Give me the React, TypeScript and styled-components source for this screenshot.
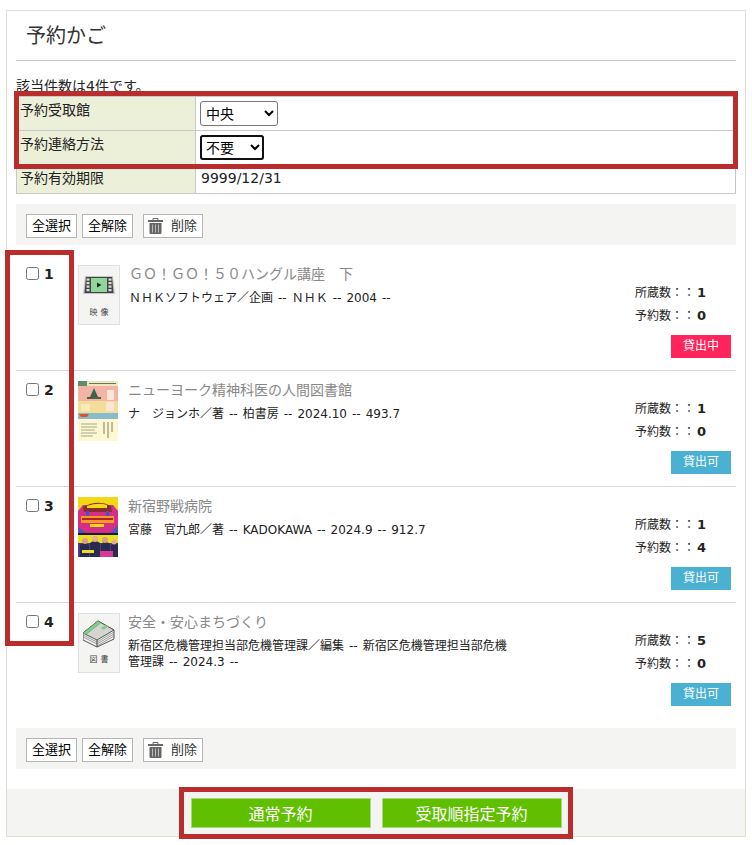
import React from "react";
import styled, { createGlobalStyle } from "styled-components";

const Global = createGlobalStyle`
  html, body { margin: 0; padding: 0; background: #fff; }
  body {
    font-family: "DejaVu Sans", "Noto Sans CJK JP", sans-serif;
    color: #222;
    font-size: 14px;
    text-spacing-trim: space-all;
  }
`;
const Page = styled.div`
  position: relative;
  width: 752px;
  height: 845px;
  padding: 10px 6px 0;
  box-sizing: border-box;
  overflow: hidden;
`;
const Panel = styled.div`
  border: 1px solid #deded2;
  height: 827px;
  box-sizing: border-box;
  display: flex;
  flex-direction: column;
`;
const Content = styled.div`
  flex: 1;
  padding: 0 9px;
`;
const Heading = styled.h1`
  margin: 0;
  height: 49px;
  padding-left: 10px;
  border-bottom: 1px solid #c8c8c8;
  font-size: 20px;
  font-weight: 400;
  line-height: 51px;
  color: #333;
`;
const Count = styled.p`
  margin: 0;
  height: 35px;
  padding-top: 15px;
  box-sizing: border-box;
  font-size: 14px;
  line-height: 20px;
  white-space: nowrap;
`;
const Table = styled.table`
  width: 720px;
  border-collapse: collapse;
  table-layout: fixed;
  font-size: 14px;
`;
const Th = styled.th`
  width: 179px;
  border: 1px solid #c8c8c8;
  background: #edf0d8;
  font-weight: 400;
  text-align: left;
  vertical-align: top;
  padding: 3px 3px;
  line-height: 20px;
  box-sizing: border-box;
`;
const Td = styled.td`
  border: 1px solid #c8c8c8;
  padding: 3px 5px;
  line-height: 20px;
  vertical-align: top;
`;
const Select = styled.select<{ $w: number; $focus?: boolean }>`
  display: block;
  width: ${(p) => p.$w}px;
  height: 25px;
  margin: 1px 0 0 -1px;
  font-family: inherit;
  font-size: 14px;
  background: #fff;
  color: #000;
  border: 1px solid #767676;
  border-radius: 3px;
  padding: 0 0 0 1px;
  ${(p) => p.$focus && `outline: 2px solid #101010; outline-offset: -2px;`}
`;
const Toolbar = styled.div<{ $top: number }>`
  margin-top: ${(p) => p.$top}px;
  height: 41px;
  background: #f4f4f2;
  padding: 10px 10px 0;
  box-sizing: border-box;
  display: flex;
  gap: 5px;
  align-items: flex-start;
`;
const ToolButton = styled.button`
  height: 24px;
  width: 51px;
  padding: 0;
  border: 1px solid #b4b4b4;
  background: #fff;
  color: #000;
  font-family: inherit;
  font-size: 13px;
  line-height: 22px;
  white-space: nowrap;
`;
const DeleteButton = styled(ToolButton)`
  width: 60px;
  margin-left: 5px;
  padding-left: 4px;
  display: flex;
  align-items: center;
  justify-content: flex-start;
  gap: 8px;
  color: #333;
`;
const List = styled.div`
  margin-top: 10px;
  margin-bottom: 9px;
`;
const Row = styled.div<{ $last?: boolean }>`
  height: 116px;
  box-sizing: border-box;
  display: grid;
  grid-template-columns: 62px 50px 1fr 112px;
  ${(p) => !p.$last && `border-bottom: 1px solid #d8d8d8;`}
`;
const CheckCell = styled.label`
  padding: 11px 0 0 10px;
  display: flex;
  align-items: flex-start;
  gap: 5px;
  font-size: 14px;
  font-weight: 700;
  line-height: 16px;
  color: #222;
`;
const Check = styled.input`
  appearance: none;
  width: 13px;
  height: 13px;
  margin: 1px 0 0;
  border: 1px solid #767676;
  border-radius: 2.5px;
  background: #fff;
`;
const ThumbCell = styled.div`
  padding-top: 10px;
`;
const Thumb = styled.div`
  width: 42px;
  height: 60px;
  box-sizing: border-box;
  border: 1px solid #e0e0e0;
  background: #f4f4f2;
  display: flex;
  flex-direction: column;
  align-items: center;
  padding-top: 10px;
`;
const ThumbLabel = styled.span<{ $top: number }>`
  font-size: 8px;
  line-height: 12px;
  letter-spacing: 3px;
  padding-left: 3px;
  margin-top: ${(p) => p.$top}px;
  color: #444;
  white-space: nowrap;
`;
const Cover = styled.svg`
  display: block;
  width: 40px;
  height: 60px;
`;
const Info = styled.div`
  padding-top: 9px;
`;
const Title = styled.div<{ $indent?: boolean }>`
  font-size: 14px;
  line-height: 20px;
  color: #888;
  white-space: nowrap;
  padding-left: ${(p) => (p.$indent ? 1 : 0)}px;
`;
const Desc = styled.div<{ $indent?: boolean }>`
  margin-top: 6px;
  width: 384px;
  font-size: 12px;
  line-height: 16px;
  word-spacing: 1.2px;
  color: #222;
  padding-left: ${(p) => (p.$indent ? 1 : 0)}px;
`;
const Side = styled.div`
  padding: 26px 5px 0 11px;
  display: flex;
  flex-direction: column;
`;
const Stat = styled.div`
  height: 23px;
  font-size: 12px;
  line-height: 23px;
  white-space: nowrap;
  color: #222;
`;
const StatValue = styled.b`
  font-size: 13px;
  margin-left: 2px;
`;
const Badge = styled.div<{ $out?: boolean }>`
  align-self: flex-end;
  margin-top: 8px;
  width: 60px;
  height: 23px;
  background: ${(p) => (p.$out ? "#ff245c" : "#4bb1d2")};
  color: #fff;
  font-size: 12px;
  line-height: 23px;
  text-align: center;
`;
const Footer = styled.div`
  height: 47px;
  background: #f4f4f2;
  display: flex;
  justify-content: center;
  gap: 11px;
  padding-top: 9px;
  box-sizing: border-box;
`;
const Primary = styled.button`
  width: 180px;
  height: 30px;
  padding: 0;
  border: 1px solid #a8d880;
  background: #60c000;
  color: #fff;
  font-family: inherit;
  font-size: 16px;
`;
const Mark = styled.div<{ $x: number; $y: number; $w: number; $h: number }>`
  position: absolute;
  left: ${(p) => p.$x}px;
  top: ${(p) => p.$y}px;
  width: ${(p) => p.$w}px;
  height: ${(p) => p.$h}px;
  box-sizing: border-box;
  border: 5px solid #b92d2d;
  pointer-events: none;
`;
const IconSvg = styled.svg<{ $top?: number }>`
  display: block;
  flex: none;
  margin-top: ${(p) => p.$top ?? 0}px;
`;

const Trash = () => (
  <IconSvg width="15" height="16" viewBox="0 0 15 16">
    <rect x="0" y="2" width="15" height="2" fill="#666" />
    <path d="M5 2V0.500h5V2" fill="none" stroke="#666" strokeWidth="1" />
    <path d="M1.500 5h12v10a1 1 0 0 1-1 1h-10a1 1 0 0 1-1-1z" fill="#666" />
    <path d="M4.500 6.500v8M7.500 6.500v8M10.500 6.500v8" stroke="#bbb" strokeWidth="1" />
  </IconSvg>
);

const VideoIcon = () => (
  <IconSvg width="32" height="18" viewBox="0 0 32 18">
    <path d="M2 0h28l2 18H0z" fill="#c4c4c0" />
    <path d="M3 1h26l1.500 16H1.500z" fill="#444" />
    <rect x="8" y="2" width="16" height="14" fill="#8fd69c" />
    {[2.5, 6, 9.5, 13].map((y) => (
      <g key={y} fill="#ddd">
        <rect x="3.500" y={y} width="3" height="2.200" />
        <rect x="25.500" y={y} width="3" height="2.200" />
      </g>
    ))}
    <path d="M14 6.500l4.500 2.500-4.500 2.500z" fill="#222" />
  </IconSvg>
);

const BookIcon = () => (
  <IconSvg $top={-4} width="32" height="28" viewBox="0 0 32 28">
    <path d="M0 13L15 1l16 9v9L14 27 0 20z" fill="#f2f2f0" stroke="#555" strokeWidth="1" />
    <path d="M0 13l14 7 17-10L15 1z" fill="#d4d4d0" stroke="#555" strokeWidth="1" />
    <path d="M0 13L15 1l3 1.700L2.800 14.400z" fill="#7fd08a" stroke="#5a8a60" strokeWidth=".5" />
    <path d="M17.500 8l5-3 3 1.700-5 3z" fill="#7fd08a" />
    <path d="M14 22l17-10M14 24l17-10M14 26l17-10M0 15l14 7M0 17l14 7" stroke="#777" strokeWidth=".7" />
    <path d="M14 20v7" stroke="#444" strokeWidth="1" />
  </IconSvg>
);

const CoverTwo = () => (
  <Cover viewBox="0 0 40 60" aria-hidden="true">
    <rect width="40" height="60" fill="#fdf8d2" />
    <rect width="40" height="5" fill="#efe6c0" />
    <rect x="0" y="0" width="9" height="5" fill="#5f8f68" />
    <path d="M11 2.500h27" stroke="#6a7a60" strokeWidth="1" />
    <rect y="5" width="40" height="15" fill="#f3b4a6" />
    <path d="M12 16l4-9 4 9z" fill="#2f6a50" />
    <rect x="9" y="16" width="14" height="2" fill="#5a5a40" />
    <rect x="29" y="9" width="7" height="10" fill="#fbe6d8" />
    <rect y="20" width="40" height="12" fill="#f5dc98" />
    <rect x="3" y="23" width="9" height="7" fill="#f9eab8" />
    <rect x="28" y="21" width="8" height="9" fill="#fbe6d8" />
    <rect y="32" width="40" height="6" fill="#86bccb" />
    <path d="M1 33h10l-2 3H3z" fill="#d9542f" />
    <path d="M3 43h16M3 46h16M3 49h14M3 52h16M3 55h12" stroke="#a8a888" strokeWidth="1" />
    <path d="M26 41v12M30 41v16M34 41v10" stroke="#a8a888" strokeWidth="1.500" />
  </Cover>
);

const CoverThree = () => (
  <Cover viewBox="0 0 40 60" aria-hidden="true">
    <rect width="40" height="60" fill="#f2d816" />
    <path d="M0 14l5-6h30l5 6v22H0z" fill="#d52e86" />
    <path d="M5 10q15-8 28-1l1 6H6z" fill="#8c2b2f" />
    <path d="M9 9q11-4 20-1v3H9z" fill="#f2d816" />
    <rect x="8" y="14" width="3" height="8" fill="#3a5ac0" />
    <rect x="28" y="14" width="3" height="8" fill="#3a5ac0" />
    <rect x="3" y="19" width="33" height="7" fill="#f59a20" />
    <path d="M4 22h31" stroke="#b02030" strokeWidth="2" />
    <rect x="12" y="27" width="14" height="3" fill="#f2d816" />
    <path d="M0 30l8 6H0zM40 28l-8 8h8z" fill="#4a56b8" />
    <rect y="36" width="40" height="2" fill="#1a1a30" />
    <rect y="38" width="40" height="8" fill="#e8e020" />
    <rect y="46" width="40" height="14" fill="#503a80" />
    <path d="M2 60V48l5-3 4 3v12zM12 60V46l5-3 5 3v14zM23 60V47l4-3 5 3v13zM33 60V48l4-2 3 2v12z" fill="#2a2a50" />
    <circle cx="7" cy="44" r="3" fill="#dca080" />
    <circle cx="17" cy="42" r="3" fill="#e4b090" />
    <circle cx="27" cy="43" r="3" fill="#dca080" />
    <circle cx="36" cy="45" r="2.500" fill="#e4b090" />
    <rect x="4" y="53" width="12" height="3" fill="#e8e020" />
    <rect x="22" y="54" width="13" height="6" fill="#d8389a" />
  </Cover>
);

const ToolbarRow = ({ top }: { top: number }) => (
  <Toolbar $top={top}>
    <ToolButton>全選択</ToolButton>
    <ToolButton>全解除</ToolButton>
    <DeleteButton>
      <Trash />
      削除
    </DeleteButton>
  </Toolbar>
);

type Item = {
  n: number;
  title: string;
  desc: string;
  held: number;
  reserved: number;
  out?: boolean;
  thumb: React.ReactNode;
  indent?: boolean;
};

const items: Item[] = [
  {
    n: 1,
    title: "ＧＯ！ＧＯ！５０ハングル講座　下",
    desc: "ＮＨＫソフトウェア／企画 -- ＮＨＫ -- 2004 --",
    held: 1,
    reserved: 0,
    out: true,
    indent: true,
    thumb: (
      <Thumb>
        <VideoIcon />
        <ThumbLabel $top={13}>映像</ThumbLabel>
      </Thumb>
    ),
  },
  {
    n: 2,
    title: "ニューヨーク精神科医の人間図書館",
    desc: "ナ　ジョンホ／著 -- 柏書房 -- 2024.10 -- 493.7",
    held: 1,
    reserved: 0,
    thumb: <CoverTwo />,
  },
  {
    n: 3,
    title: "新宿野戦病院",
    desc: "宮藤　官九郎／著 -- KADOKAWA -- 2024.9 -- 912.7",
    held: 1,
    reserved: 4,
    thumb: <CoverThree />,
  },
  {
    n: 4,
    title: "安全・安心まちづくり",
    desc: "新宿区危機管理担当部危機管理課／編集 -- 新宿区危機管理担当部危機管理課 -- 2024.3 --",
    held: 5,
    reserved: 0,
    thumb: (
      <Thumb>
        <BookIcon />
        <ThumbLabel $top={6}>図書</ThumbLabel>
      </Thumb>
    ),
  },
];

export default function App() {
  return (
    <Page>
      <Global />
      <Panel>
        <Content>
          <Heading>予約かご</Heading>
          <Count>該当件数は4件です。</Count>
          <Table>
            <tbody>
              <tr style={{ height: 34 }}>
                <Th>予約受取館</Th>
                <Td>
                  <Select $w={78} defaultValue="中央">
                    <option>中央</option>
                  </Select>
                </Td>
              </tr>
              <tr style={{ height: 34 }}>
                <Th>予約連絡方法</Th>
                <Td>
                  <Select $w={64} $focus defaultValue="不要">
                    <option>不要</option>
                  </Select>
                </Td>
              </tr>
              <tr style={{ height: 29 }}>
                <Th>予約有効期限</Th>
                <Td>9999/12/31</Td>
              </tr>
            </tbody>
          </Table>
          <ToolbarRow top={10} />
          <List>
            {items.map((it, i) => (
              <Row key={it.n} $last={i === items.length - 1}>
                <CheckCell>
                  <Check type="checkbox" />
                  {it.n}
                </CheckCell>
                <ThumbCell>{it.thumb}</ThumbCell>
                <Info>
                  <Title $indent={it.indent}>{it.title}</Title>
                  <Desc $indent={it.indent}>{it.desc}</Desc>
                </Info>
                <Side>
                  <Stat>
                    所蔵数：：<StatValue>{it.held}</StatValue>
                  </Stat>
                  <Stat>
                    予約数：：<StatValue>{it.reserved}</StatValue>
                  </Stat>
                  <Badge $out={it.out}>{it.out ? "貸出中" : "貸出可"}</Badge>
                </Side>
              </Row>
            ))}
          </List>
          <ToolbarRow top={0} />
        </Content>
        <Footer>
          <Primary>通常予約</Primary>
          <Primary>受取順指定予約</Primary>
        </Footer>
      </Panel>
      <Mark $x={14} $y={91} $w={724} $h={78} />
      <Mark $x={5} $y={250} $w={69} $h={396} />
      <Mark $x={179} $y={787} $w={394} $h={52} />
    </Page>
  );
}
